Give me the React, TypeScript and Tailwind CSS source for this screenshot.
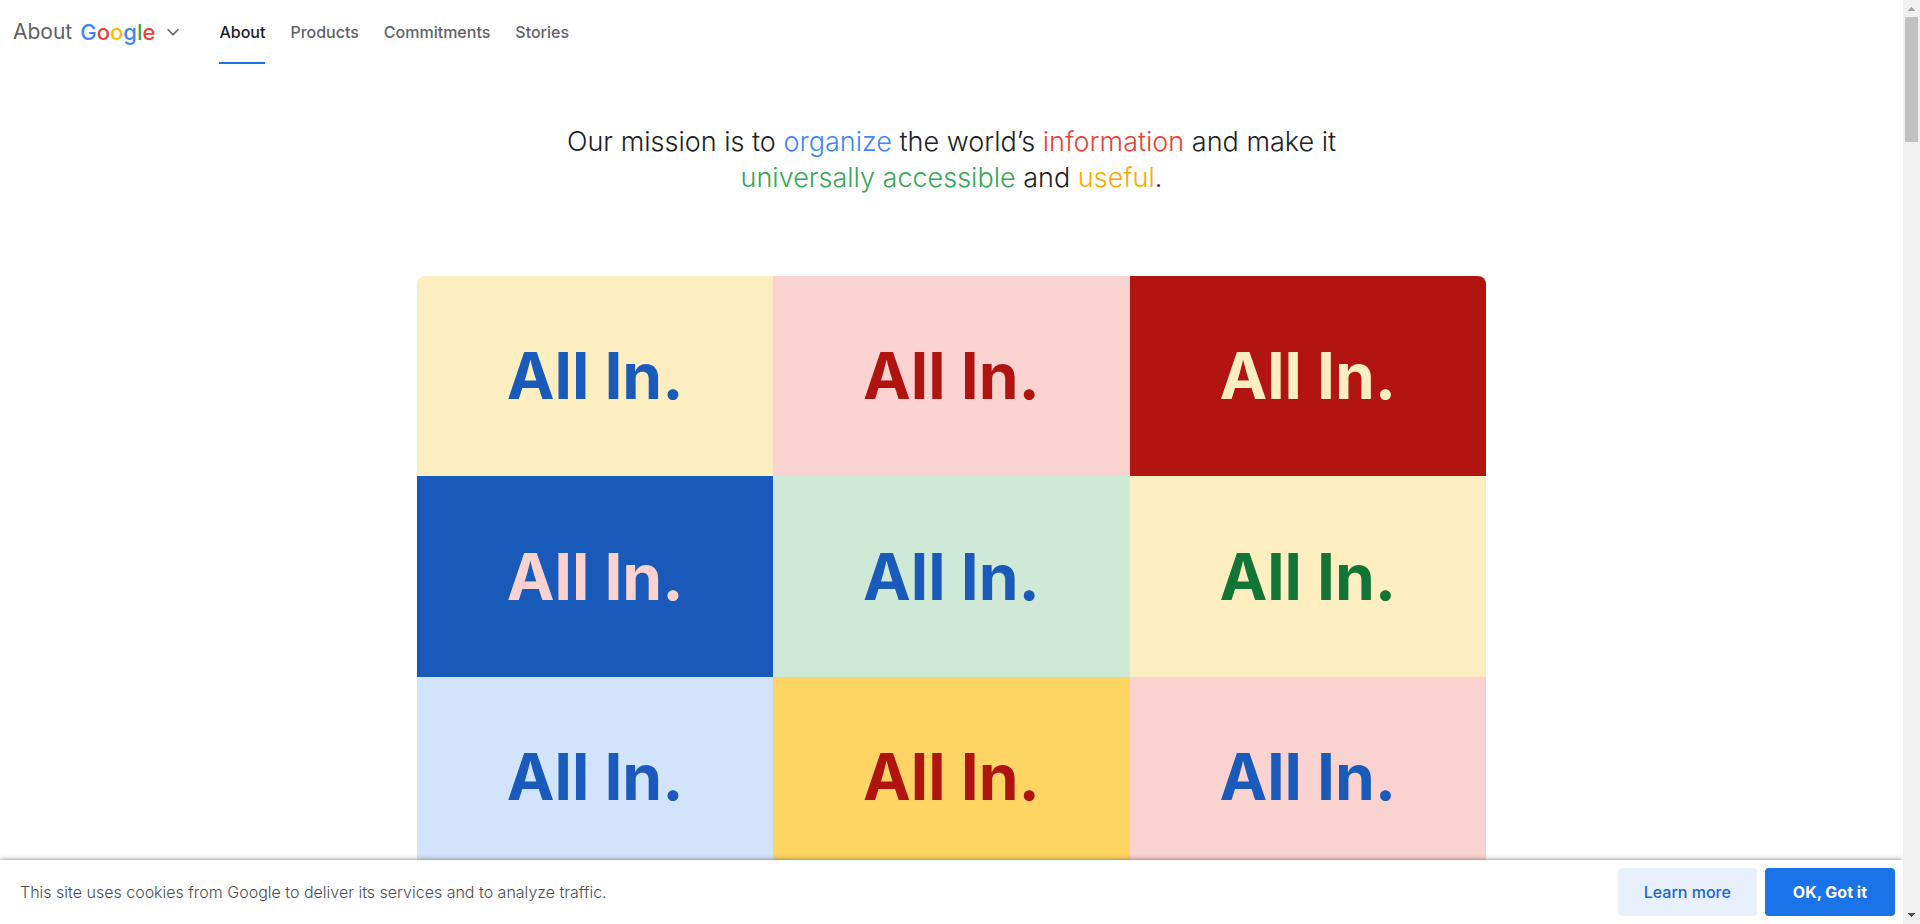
const tiles = [
  { id: 1, style: 'bg-[#fdeec1] text-[#1a5aba]' },
  { id: 2, style: 'bg-[#fad2cf] text-[#b01411]' },
  { id: 3, style: 'bg-[#b21411] text-[#fdeec1]' },
  { id: 4, style: 'bg-[#1959ba] text-[#fad2cf]' },
  { id: 5, style: 'bg-[#ceead6] text-[#1a5aba]' },
  { id: 6, style: 'bg-[#fdeec1] text-[#137535]' },
  { id: 7, style: 'bg-[#d2e3fc] text-[#1a5aba]' },
  { id: 8, style: 'bg-[#fed565] text-[#b01411]' },
  { id: 9, style: 'bg-[#fad2cf] text-[#1a5aba]' },
];

const links = ['Products', 'Commitments', 'Stories'];

function Header() {
  return (
    <header className="flex h-16 items-stretch pl-[13px] text-[#5f6368]">
      <button type="button" className="flex items-center text-[21px] leading-7">
        <span>About</span>
        <span className="ml-2 text-[22px] font-medium" aria-label="Google">
          <span className="text-[#4285f4]">G</span>
          <span className="text-[#ea4335]">o</span>
          <span className="text-[#fbbc04]">o</span>
          <span className="text-[#4285f4]">g</span>
          <span className="text-[#34a853]">l</span>
          <span className="text-[#ea4335]">e</span>
        </span>
        <svg className="ml-3 h-2 w-3" viewBox="0 0 12 8" fill="none" stroke="currentColor" strokeWidth="1.5" aria-hidden="true">
          <path d="M.6 1.2 6 6.6l5.4-5.4" />
        </svg>
      </button>
      <nav className="ml-10 flex gap-[25px] text-[16px] font-medium leading-6">
        <a href="#about" aria-current="page" className="flex items-center border-b-2 border-[#1a73e8] pt-0.5 text-[#202124]">
          About
        </a>
        {links.map((label) => (
          <a key={label} href={'#' + label.toLowerCase()} className="flex items-center">
            {label}
          </a>
        ))}
      </nav>
    </header>
  );
}

function Scrollbar() {
  return (
    <div className="relative z-20 flex w-[17px] shrink-0 flex-col items-center bg-[#f0f0f0]" aria-hidden="true">
      <svg className="h-[17px] w-[17px]" viewBox="0 0 17 17" fill="#a3a3a3" shapeRendering="crispEdges">
        <path d="M8 7h1v1h1v1h1v1h1v1H5v-1h1V9h1V8h1z" />
      </svg>
      <div className="h-[125px] w-[13px] bg-[#c1c1c1]" />
      <svg className="mt-auto h-[17px] w-[17px]" viewBox="0 0 17 17" fill="#505050" shapeRendering="crispEdges">
        <path d="M5 6h7v1h-1v1h-1v1H9v1H8V9H7V8H6V7H5z" />
      </svg>
    </div>
  );
}

export default function App() {
  return (
    <div className="flex h-screen overflow-hidden bg-white font-['Inter',sans-serif]">
      <div className="flex min-w-0 flex-1 flex-col">
        <div className="min-h-0 flex-1 overflow-hidden">
          <Header />
          <main>
            <h1 className="mx-auto mt-[60px] max-w-[860px] text-center text-[27px] font-light leading-9 text-[#202124]">
              Our mission is to <span className="text-[#4285f4]">organize</span> the world’s{' '}
              <span className="text-[#ea4335]">information</span> and make it
              <br />
              <span className="text-[#34a853]">universally accessible</span> and{' '}
              <span className="text-[#f9ab00]">useful</span>.
            </h1>
            <div className="mx-auto mt-20 grid aspect-video w-full max-w-[1069px] grid-cols-3 grid-rows-3 overflow-hidden rounded-lg">
              {tiles.map((tile) => (
                <div key={tile.id} className={'flex items-center justify-center text-[64px] font-bold leading-none ' + tile.style}>
                  All In.
                </div>
              ))}
            </div>
          </main>
        </div>
        <footer className="relative z-10 flex items-center gap-2 bg-white py-2 pl-5 pr-2 shadow-[0_0_5px_rgba(0,0,0,0.5)]">
          <p className="flex-1 text-[16px] font-light leading-6 text-[#4a4e52]">
            This site uses cookies from Google to deliver its services and to analyze traffic.
          </p>
          <a href="#cookies" className="flex h-12 items-center rounded bg-[#e8f0fe] px-[26px] text-[16px] font-medium text-[#1967d2]">
            Learn more
          </a>
          <button type="button" className="h-12 rounded bg-[#1a73e8] px-7 text-[16px] font-bold text-white">
            OK, Got it
          </button>
        </footer>
      </div>
      <Scrollbar />
    </div>
  );
}
